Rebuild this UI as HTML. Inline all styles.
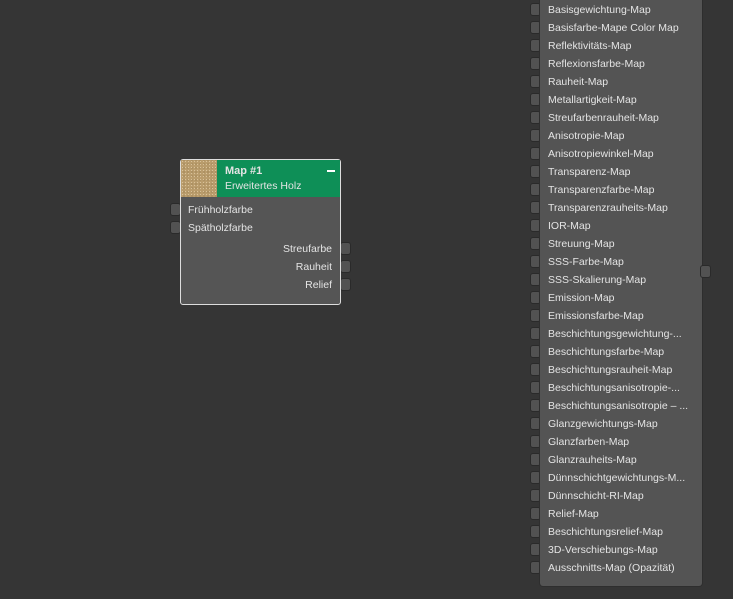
<!DOCTYPE html>
<html><head><meta charset="utf-8"><style>
body{margin:0;width:733px;height:599px;background:#353535;overflow:hidden;font-family:"Liberation Sans","DejaVu Sans",sans-serif;font-size:11px;color:#e4e4e4;position:relative}
.port{position:absolute;width:11px;height:13px;background:#525252;border:1px solid #2a2a2a;border-radius:3px;box-sizing:border-box}
.panel{position:absolute;left:540px;top:-4px;width:162px;height:590px;background:#545454;border-radius:3px;box-shadow:0 0 0 1px #2e2e2e}
.row{position:absolute;left:548px;font-size:10.5px;white-space:nowrap;line-height:12px}
.node{position:absolute;left:180px;top:159px;width:161px;height:146px;background:#555;border:1px solid #ddd;border-radius:3px;box-sizing:border-box}
.hdr{position:absolute;left:0;top:0;width:159px;height:37px;background:#0e8f57}
.thumb{position:absolute;left:0;top:0;width:36px;height:37px;background:#b99c6c;background-image:radial-gradient(#d9c29a 0.6px,transparent 0.8px),radial-gradient(#8e7348 0.6px,transparent 0.8px);background-size:3px 3px,4px 4px;background-position:0 0,1px 2px}
.t{position:absolute;font-size:10.5px;white-space:nowrap}
</style></head><body>
<div id="rows"></div>
<div class="panel"></div>
<div class="port" style="left:700px;top:265px"></div>
<div class="port" style="left:170px;top:203px"></div>
<div class="port" style="left:170px;top:221px"></div>
<div class="port" style="left:340px;top:242px"></div>
<div class="port" style="left:340px;top:260px"></div>
<div class="port" style="left:340px;top:278px"></div>
<div class="node">
<div class="hdr"><div class="thumb"></div>
<div class="t" style="left:44px;top:5px;font-weight:bold;font-size:11px">Map #1</div>
<div class="t" style="left:44px;top:20px">Erweitertes Holz</div>
<div style="position:absolute;left:146px;top:10px;width:8px;height:2px;background:#fff"></div></div>
<div class="t" style="left:7px;top:44px">Frühholzfarbe</div>
<div class="t" style="left:7px;top:62px">Spätholzfarbe</div>
<div class="t" style="right:8px;top:83px">Streufarbe</div>
<div class="t" style="right:8px;top:101px">Rauheit</div>
<div class="t" style="right:8px;top:119px">Relief</div>
</div>
<div id="rows2"></div>
<script>
var n=["Basisgewichtung-Map","Basisfarbe-Mape Color Map","Reflektivitäts-Map","Reflexionsfarbe-Map","Rauheit-Map","Metallartigkeit-Map","Streufarbenrauheit-Map","Anisotropie-Map","Anisotropiewinkel-Map","Transparenz-Map","Transparenzfarbe-Map","Transparenzrauheits-Map","IOR-Map","Streuung-Map","SSS-Farbe-Map","SSS-Skalierung-Map","Emission-Map","Emissionsfarbe-Map","Beschichtungsgewichtung-...","Beschichtungsfarbe-Map","Beschichtungsrauheit-Map","Beschichtungsanisotropie-...","Beschichtungsanisotropie – ...","Glanzgewichtungs-Map","Glanzfarben-Map","Glanzrauheits-Map","Dünnschichtgewichtungs-M...","Dünnschicht-RI-Map","Relief-Map","Beschichtungsrelief-Map","3D-Verschiebungs-Map","Ausschnitts-Map (Opazität)"];
var h="",g="";for(var i=0;i<n.length;i++){var y=3+18*i;h+='<div class="port" style="left:530px;top:'+y+'px"></div>';g+='<div class="row" style="top:'+(y+1)+'px">'+n[i]+'</div>';}
document.getElementById("rows").innerHTML=h;
document.getElementById("rows2").innerHTML=g;
</script>
</body></html>
